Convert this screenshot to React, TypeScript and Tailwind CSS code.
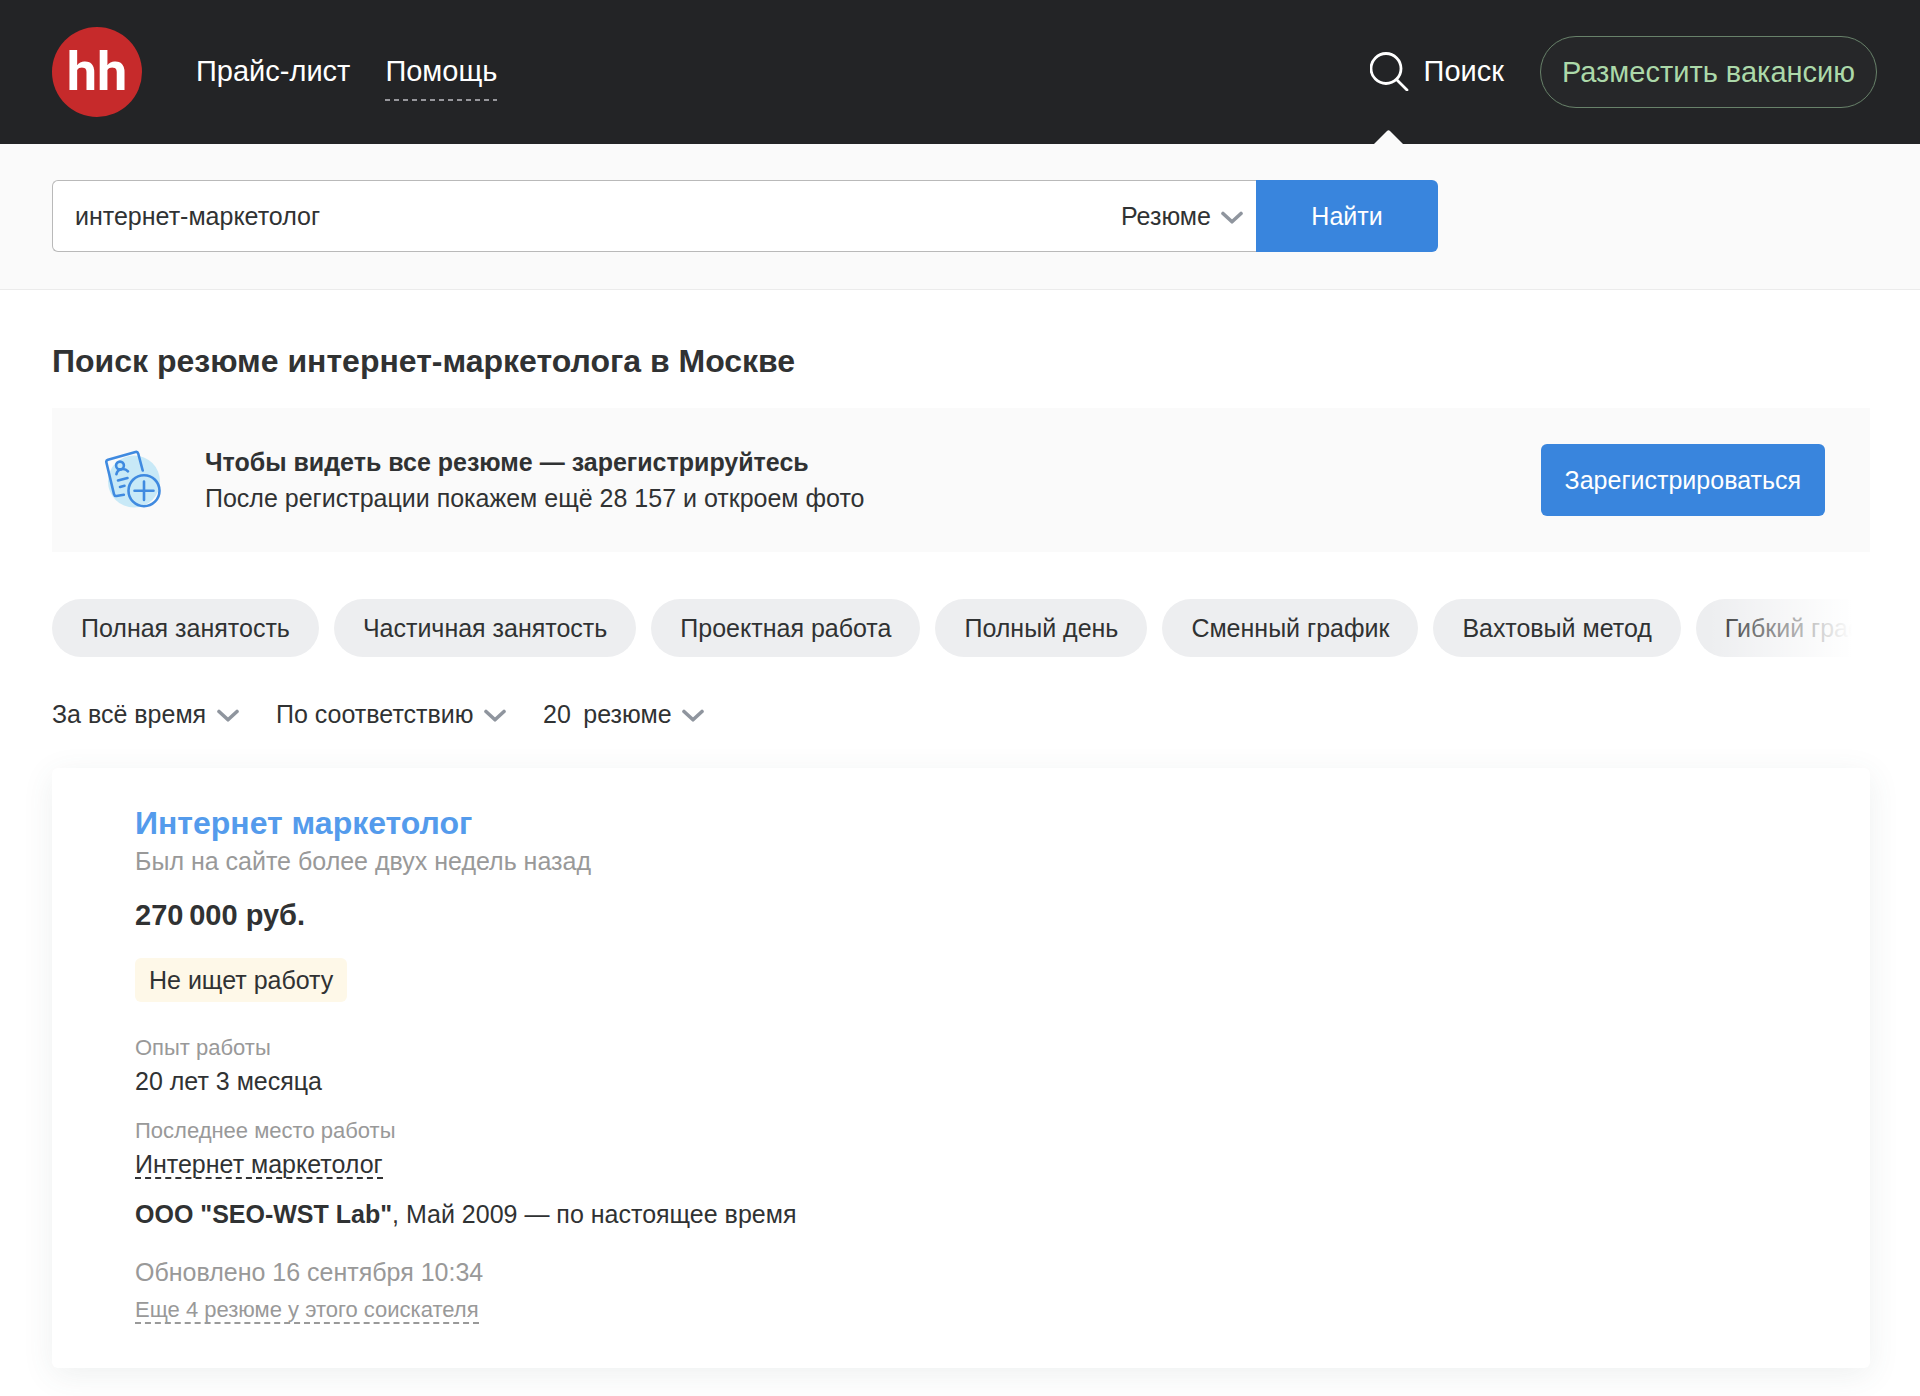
import { useState } from 'react';

const employmentFilters = [
  'Полная занятость',
  'Частичная занятость',
  'Проектная работа',
  'Полный день',
  'Сменный график',
  'Вахтовый метод',
  'Гибкий график',
];

const sortings = [
  { id: 'period', label: 'Период', value: 'За всё время' },
  { id: 'order', label: 'Сортировка', value: 'По соответствию' },
  { id: 'perPage', label: 'Резюме на странице', value: '20\u2002резюме' },
];

function Chevron() {
  return (
    <svg className="pointer-events-none h-4 w-[22px] shrink-0" viewBox="0 0 22 16" fill="none">
      <path d="M2 5.500L11 13.800L20 5.500" stroke="#8f959e" strokeWidth={3.600} strokeLinecap="round" strokeLinejoin="round" />
    </svg>
  );
}

function Dropdown({ id, label, value }: { id: string; label: string; value: string }) {
  return (
    <div className="flex items-center gap-[10px]">
      <select id={id} aria-label={label} className="cursor-pointer appearance-none bg-transparent outline-none">
        <option>{value}</option>
      </select>
      <Chevron />
    </div>
  );
}

function Header() {
  return (
    <header className="flex h-36 items-center bg-[#232426] pr-[43px] pl-[52px] text-[29px] leading-9 text-white">
      <a
        href="#"
        className="flex size-[90px] items-center justify-center rounded-full bg-[#c62a2b] font-['Roboto',sans-serif] text-[54px] font-bold"
      >
        hh
      </a>
      <nav className="ml-[54px] flex gap-[35px] pb-0.5">
        <a href="#">Прайс-лист</a>
        <a href="#" className="relative">
          Помощь
          <svg className="absolute -bottom-3 left-0 h-[2px] w-full">
            <line x1="0" y1="1" x2="100%" y2="1" stroke="#97979c" strokeWidth={2} strokeDasharray="5 4" />
          </svg>
        </a>
      </nav>
      <a href="#" className="relative ml-auto flex h-full items-center gap-[14px] pb-0.5">
        <svg className="size-10" viewBox="0 -1 40 40" fill="none" stroke="#fff" strokeWidth={2.8} strokeLinecap="round">
          <circle cx="16" cy="16.500" r="15" />
          <path d="M27 28L37 38" />
        </svg>
        Поиск
        <svg className="absolute bottom-0 left-1 h-[14px] w-[29px]" viewBox="0 0 29 14">
          <path d="M0 14L13 1Q14.500 -0.500 16 1L29 14Z" fill="#fafafa" />
        </svg>
      </a>
      <button className="ml-9 h-[72px] rounded-full border border-[#68826a] bg-[#262729] px-[21px] text-[#acd9a9]">
        Разместить вакансию
      </button>
    </header>
  );
}

function SearchForm() {
  const [query, setQuery] = useState('интернет-маркетолог');

  return (
    <section className="border-b border-[#ebebeb] bg-[#fafafa] px-[52px] pt-9 pb-[37px]">
      <form className="flex h-[72px] max-w-[1386px]" onSubmit={(e) => e.preventDefault()}>
        <div className="flex flex-1 items-center rounded-l-md border border-r-0 border-[#b9b9b9] bg-white pr-[13px]">
          <input
            aria-label="Поиск резюме"
            className="h-full min-w-0 flex-1 bg-transparent pl-[22px] outline-none"
            value={query}
            onChange={(e) => setQuery(e.target.value)}
          />
          <Dropdown id="searchType" label="Что искать" value="Резюме" />
        </div>
        <button className="w-[182px] rounded-r-md bg-[#3985dd] text-white">Найти</button>
      </form>
    </section>
  );
}

function RegisterBanner() {
  return (
    <section className="mt-[27px] flex h-36 items-center bg-[#fafafa] pr-[45px] pl-[53px]">
      <svg className="h-[60px] w-[56px] shrink-0" viewBox="15 20 56 60" fill="none">
        <circle cx="44" cy="51.500" r="26" fill="#c8e9f7" />
        <g stroke="#3f8ae0" strokeWidth={2.6} strokeLinecap="round" strokeLinejoin="round">
          <path d="M52.700 40.500L48.200 23.500Q47.600 21.500 45.500 22L18 29.700Q15.900 30.400 16.400 32.500L24 64.300Q24.500 66.300 26.500 66L33.800 64.800" />
          <circle cx="30" cy="35.500" r="3.900" />
          <path d="M26.400 44.300C27.500 38.500 34.500 37.500 38 41.400" />
          <path d="M28 50.500L37.500 48M30 57L34.500 55.800" />
          <circle cx="54" cy="60.700" r="15.500" />
          <path d="M54 51.500V70M44.500 60.800H63.500" />
        </g>
      </svg>
      <div className="ml-11">
        <h2 className="font-bold">Чтобы видеть все резюме — зарегистрируйтесь</h2>
        <p>После регистрации покажем ещё 28 157 и откроем фото</p>
      </div>
      <button className="ml-auto h-[72px] rounded-md bg-[#3985dd] px-6 text-white">Зарегистрироваться</button>
    </section>
  );
}

function ResumeCard() {
  return (
    <article className="mt-9 rounded-md bg-white px-[83px] pt-9 pb-[42px] shadow-[0_7px_32px_rgba(67,94,85,0.09)]">
      <h2 className="text-[32px] leading-[39px] font-bold">
        <a href="#" className="text-[#549bec]">
          Интернет маркетолог
        </a>
      </h2>
      <p className="text-[#999]">Был на сайте более двух недель назад</p>
      <p className="mt-[18px] text-[29px] font-bold">270&#8201;000 руб.</p>
      <span className="mt-[25px] inline-block rounded-md bg-[#fef8e8] px-[14px] py-1">Не ищет работу</span>
      <dl>
        <dt className="mt-[30px] text-[22px] leading-[31px] text-[#999]">Опыт работы</dt>
        <dd>20 лет 3 месяца</dd>
        <dt className="mt-4 text-[22px] leading-[31px] text-[#999]">Последнее место работы</dt>
        <dd>
          <button className="cursor-pointer border-b-2 border-dashed border-[#333] leading-[26px]">Интернет маркетолог</button>
        </dd>
      </dl>
      <p className="mt-[14px]">
        <b>ООО "SEO-WST Lab"</b>, Май 2009 — по настоящее время
      </p>
      <p className="mt-[22px] text-[#999]">Обновлено 16 сентября 10:34</p>
      <button className="cursor-pointer border-b-2 border-dashed border-[#999] text-[22px] leading-6 text-[#999]">
        Еще 4 резюме у этого соискателя
      </button>
    </article>
  );
}

export default function App() {
  return (
    <div className="overflow-hidden bg-white pb-[29px] font-['Liberation_Sans',Arial,sans-serif] text-[25px] leading-9 text-[#303233]">
      <Header />
      <SearchForm />
      <main className="pr-[50px] pl-[52px]">
        <h1 className="mt-[51px] text-[32px] leading-10 font-bold">Поиск резюме интернет-маркетолога в Москве</h1>
        <RegisterBanner />

        {/* фильтры по занятости и графику */}
        <div className="relative mt-[47px] mr-[18px] flex gap-[15px] overflow-hidden">
          {employmentFilters.map((name) => (
            <button key={name} className="h-[58px] shrink-0 rounded-full bg-[#edeef0] px-[29px] whitespace-nowrap">
              {name}
            </button>
          ))}
          <div className="pointer-events-none absolute inset-y-0 right-0 w-36 bg-linear-to-r from-white/0 to-white" />
        </div>

        <div className="mt-[39px] flex gap-[37px]">
          {sortings.map((item) => (
            <Dropdown key={item.id} {...item} />
          ))}
        </div>

        <ResumeCard />
      </main>
    </div>
  );
}
